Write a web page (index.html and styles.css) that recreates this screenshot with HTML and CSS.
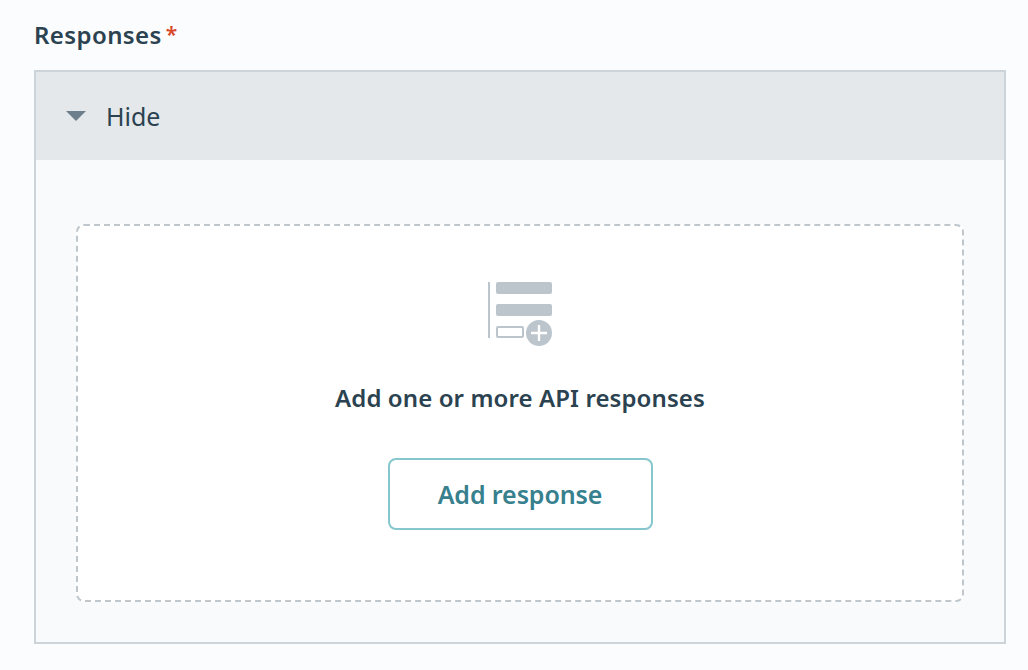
FILE: index.html
```html
<!DOCTYPE html>
<html lang="en">
<head>
  <meta charset="UTF-8" />
  <title>Responses</title>
  <link rel="stylesheet" href="styles.css">
</head>
<body>
  <div class="field">
    <div class="field-label">Responses<span class="required">*</span></div>
    <div class="panel">
      <div class="panel-head">
        <span class="caret"></span>
        <span class="panel-title">Hide</span>
      </div>
      <div class="panel-body">
        <div class="empty">
          <svg class="empty-icon" width="66" height="66" viewBox="0 0 66 66">
            <rect x="1" y="1" width="2" height="56" fill="#bcc5cc"/>
            <rect x="9" y="1" width="56" height="12" rx="2" fill="#bcc5cc"/>
            <rect x="9" y="23" width="56" height="12" rx="2" fill="#bcc5cc"/>
            <rect x="10" y="46" width="26" height="10" rx="1" fill="none" stroke="#bcc5cc" stroke-width="2"/>
            <circle cx="52" cy="52" r="13" fill="#bcc5cc"/>
            <path d="M52 44v16M44 52h16" stroke="#fff" stroke-width="2.4"/>
          </svg>
          <div class="empty-text">Add one or more API responses</div>
          <button class="add-btn" type="button">Add response</button>
        </div>
      </div>
    </div>
  </div>
</body>
</html>
```

FILE: styles.css
```css
body {
  margin: 0;
  background: #fbfcfe;
  color: #2b4250;
  font-family: "Noto Sans", Arial, sans-serif;
}
.field {
  padding: 18px 22px 26px 34px;
}
.field-label {
  font-size: 24px;
  line-height: 34px;
  font-weight: 600;
  letter-spacing: 0.4px;
  margin-bottom: 18px;
}
.required {
  color: #d8492c;
  margin-left: 4px;
  font-size: 21px;
  line-height: 1;
  vertical-align: 2px;
  letter-spacing: 0;
}
.panel {
  border: 2px solid #ccd4da;
  background: #f8fafc;
}
.panel-head {
  display: flex;
  align-items: center;
  height: 88px;
  padding-left: 30px;
  background: #e4e8eb;
}
.caret {
  width: 0;
  height: 0;
  border-left: 10px solid transparent;
  border-right: 10px solid transparent;
  border-top: 10px solid #6d7f8c;
}
.panel-title {
  margin-left: 20px;
  font-size: 25px;
  letter-spacing: 0;
}
.panel-body {
  padding: 64px 40px 40px;
}
.empty {
  display: flex;
  flex-direction: column;
  align-items: center;
  height: 374px;
  background: #fff;
  border: 2px dashed #bfc7cd;
  border-radius: 8px;
}
.empty-icon {
  margin-top: 55px;
}
.empty-text {
  margin-top: 34px;
  font-size: 24px;
  line-height: 34px;
  font-weight: 600;
  letter-spacing: 0.1px;
}
.add-btn {
  width: 265px;
  height: 72px;
  margin-top: 43px;
  background: #fff;
  border: 2px solid #86c6cd;
  border-radius: 8px;
  color: #37808e;
  font-family: inherit;
  font-size: 25px;
  font-weight: 600;
  letter-spacing: -0.1px;
}
```
